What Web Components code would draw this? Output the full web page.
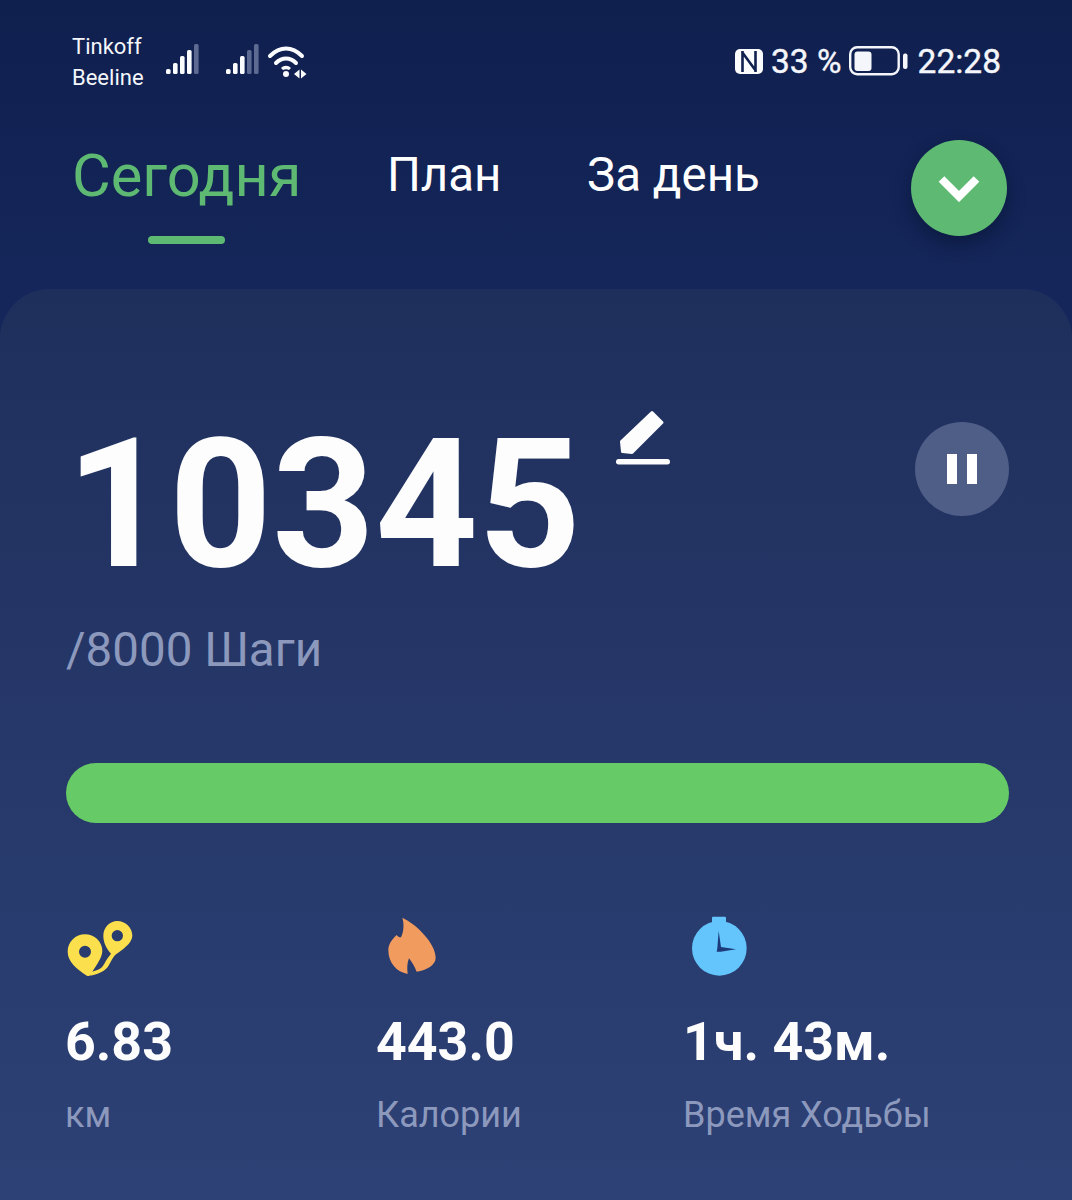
<!DOCTYPE html>
<html lang="ru">
<head>
<meta charset="utf-8">
<title>Шаги</title>
<style>
html,body{margin:0;padding:0;background:#10204f;font-family:Roboto,"Liberation Sans",sans-serif;}
</style>
</head>
<body>
<app-shell>
  <status-bar></status-bar>
  <tab-bar></tab-bar>
  <step-card>
    <stat-item value="6.83" label="км" style="width:311px;margin-left:-1px">
      <svg slot="icon" width="90" height="85" viewBox="0 0 270 255" style="margin:-8px 0 0 -10px">
        <path fill="#fbdf4d" fill-rule="evenodd" d="M38 140C38 110 62 88 90 88C118 88 142 110 142 138C142 160 118 190 104 212C100 214 96 214 92 210C66 192 38 170 38 140zM90 122a18 18 0 1 0 0 36a18 18 0 1 0 0-36z"/>
        <path fill="#fbdf4d" fill-rule="evenodd" d="M145 92C145 68 164 48 187 48C211 48 232 68 232 92C232 115 200 135 183 148C176 154 170 165 162 180C152 198 130 208 106 212L104 200C124 198 140 192 148 176C154 164 160 156 168 146C152 128 145 110 145 92zM187 75a17 17 0 1 0 0 34a17 17 0 1 0 0-34z"/>
      </svg>
    </stat-item>
    <stat-item value="443.0" label="Калории" style="width:307px">
      <svg slot="icon" width="75" height="85" viewBox="0 0 225 255" style="margin:-8px 0 0 -1px">
        <path fill="#f29b5f" d="M82 38C125 58 182 115 182 158C182 180 155 195 125 200C118 182 110 170 102 160C96 175 96 190 98 207C65 200 40 175 40 135C40 118 52 102 65 90C68 94 72 97 78 97C86 80 88 58 82 38z"/>
      </svg>
    </stat-item>
    <stat-item value="1ч. 43м." label="Время Ходьбы">
      <svg slot="icon" width="80" height="85" viewBox="0 0 240 255" style="margin:-8px 0 0 -3px">
        <rect x="96" y="35" width="42" height="24" rx="3" fill="#63c5fb"/>
        <circle cx="118" cy="130" r="82" fill="#63c5fb"/>
        <path fill="#1c3a7a" d="M116 78l7 48 45 7-46 7-12 0 2-10z"/>
      </svg>
    </stat-item>
  </step-card>
</app-shell>
<script>
// status bar icons
const bars = (x, bright) => [0,1,2,3,4].map(i => {
  const h = [5,11,18,24,30][i]
  return `<rect x="${x + i*7}" y="${30-h}" width="4.6" height="${h}" rx="1.6" fill="${i < bright ? '#fbfcfe' : '#5d6a91'}"/>`
}).join('')

class AppShell extends HTMLElement {
  constructor() {
    super()
    this.attachShadow({mode: 'open'}).innerHTML = `<style>
      :host{display:block;width:1072px;height:1200px;overflow:hidden;background:linear-gradient(#0f1f4e,#15265a 290px);color:#fff;}
    </style><slot></slot>`
  }
}

class StatusBar extends HTMLElement {
  constructor() {
    super()
    this.attachShadow({mode: 'open'}).innerHTML = `<style>
      :host{display:flex;align-items:center;height:60px;padding:31px 71px 0 72px;font-family:Roboto,"Liberation Sans",sans-serif;color:#f4f6fb;}
      .ops{display:flex;flex-direction:column;font-size:22px;line-height:31px;width:94px;padding-top:2px;}
      svg{display:block;}
      .right{margin-left:auto;display:flex;align-items:center;font-size:33.500px;-webkit-text-stroke:.4px #f4f6fb;gap:8px;}
      .right .batt{margin:0 2px 0 -1px;}
    </style>
    <div class="ops"><span>Tinkoff</span><span>Beeline</span></div>
    <svg width="146" height="40" viewBox="0 0 146 40" style="margin-top:-4px">
      <g transform="translate(0,5)">${bars(0,4)}</g>
      <g transform="translate(60,5)">${bars(0,3)}</g>
      <g fill="none" stroke="#fbfcfe" stroke-width="4" stroke-linecap="round">
        <path d="M104 17c10-10 22-10 32 0"/>
        <path d="M110 24c6-6 14-6 20 0"/>
      </g>
      <path fill="#fbfcfe" d="M115 29c3-3 7-3 10 0l-2 2c-2-1-4-1-6 0z"/>
      <circle cx="120" cy="35" r="3" fill="#fbfcfe"/>
      <path fill="#fbfcfe" d="M128 35l5.500-4.500v9zM135 30.500l5.500 4.500-5.500 4.500z"/>
    </svg>
    <div class="right">
      <svg width="28" height="25" viewBox="0 0 28 25">
        <rect width="28" height="25" rx="5" fill="#fbfcfe"/>
        <path fill="none" stroke="#10204f" stroke-width="2.600" d="M7.500 2v21M20.500 2v21M7 3l14 19"/>
      </svg>
      <span>33 %</span>
      <svg class="batt" width="59" height="30" viewBox="0 0 59 30">
        <rect x="1.200" y="1.200" width="48.500" height="27" rx="7" fill="none" stroke="#f4f6fb" stroke-width="2.400"/>
        <rect x="5.500" y="5.500" width="17" height="19.500" rx="3" fill="#f4f6fb"/>
        <rect x="54" y="7.500" width="4.500" height="15.500" rx="2" fill="#f4f6fb"/>
      </svg>
      <span>22:28</span>
    </div>`
  }
}

class TabBar extends HTMLElement {
  constructor() {
    super()
    this.attachShadow({mode: 'open'}).innerHTML = `<style>
      :host{display:flex;align-items:flex-start;height:198px;padding:0 65px 0 72px;font-family:Roboto,"Liberation Sans",sans-serif;}
      .tab{display:flex;flex-direction:column;align-items:center;margin-right:85.500px;font-size:47.500px;line-height:56px;padding-top:56px;}
      .tab.on{color:#5eba72;font-size:59.500px;line-height:66px;padding-top:52px;}
      .tab.on i{display:block;width:77px;height:8px;border-radius:4px;background:#5eba72;margin-top:27px;}
      button{margin:49px 0 0 auto;width:96px;height:96px;border:0;border-radius:50%;padding:0;background:#5eba72;box-shadow:0 8px 18px rgba(5,15,40,.45);display:flex;align-items:center;justify-content:center;}
    </style>
    <div class="tab on">Сегодня<i></i></div>
    <div class="tab">План</div>
    <div class="tab">За день</div>
    <button><svg width="44" height="28" viewBox="0 0 44 28"><path d="M4.500 5l17.500 17.500L39.500 5" fill="none" stroke="#fff" stroke-width="8"/></svg></button>`
  }
}

class StepCard extends HTMLElement {
  constructor() {
    super()
    this.attachShadow({mode: 'open'}).innerHTML = `<style>
      :host{display:block;height:911px;box-sizing:border-box;padding:0 62px 0 66px;border-radius:50px 50px 0 0;background:linear-gradient(#1f2f5c,#2d4176);font-family:Roboto,"Liberation Sans",sans-serif;}
      .top{display:flex;align-items:flex-start;padding-top:122px;}
      .num{font-size:179.500px;font-weight:700;line-height:188px;color:#fdfdfe;}
      .edit{margin:-1px 0 0 35px;display:block;}
      .pause{margin:11px 1px 0 auto;width:94px;height:94px;border-radius:50%;background:#4f5e87;display:flex;align-items:center;justify-content:center;gap:10px;}
      .pause i{display:block;width:10px;height:30px;background:#fff;}
      .goal{font-size:47.500px;line-height:54px;color:#8c99bd;margin-top:24px;}
      .bar{height:60px;border-radius:30px;background:#66cb67;margin:86px 1px 0 0;}
      .stats{display:flex;margin-top:90px;}
    </style>
    <div class="top">
      <div class="num">10345</div>
      <svg class="edit" width="54" height="56" viewBox="0 0 54 56">
        <path fill="#fdfdfe" stroke="#fdfdfe" stroke-width="3" stroke-linejoin="round" d="M36 2.500l10 10-30 30-9.500-1-1-10z"/>
        <rect x="0" y="49" width="54" height="5.500" rx="2.700" fill="#fdfdfe"/>
      </svg>
      <div class="pause"><i></i><i></i></div>
    </div>
    <div class="goal">/8000 Шаги</div>
    <div class="bar"></div>
    <div class="stats"><slot></slot></div>`
  }
}

class StatItem extends HTMLElement {
  constructor() {
    super()
    this.attachShadow({mode: 'open'}).innerHTML = `<style>
      :host{display:block;font-family:Roboto,"Liberation Sans",sans-serif;}
      .ic{height:66px;}
      .v{font-size:53.700px;font-weight:700;line-height:60px;margin-top:33px;color:#fdfdfe;}
      .l{font-size:36px;line-height:40px;margin-top:23px;color:#8c99bd;}
    </style>
    <div class="ic"><slot name="icon"></slot></div>
    <div class="v">${this.getAttribute('value')}</div>
    <div class="l">${this.getAttribute('label')}</div>`
  }
}

customElements.define('app-shell', AppShell)
customElements.define('status-bar', StatusBar)
customElements.define('tab-bar', TabBar)
customElements.define('step-card', StepCard)
customElements.define('stat-item', StatItem)
</script>
</body>
</html>
